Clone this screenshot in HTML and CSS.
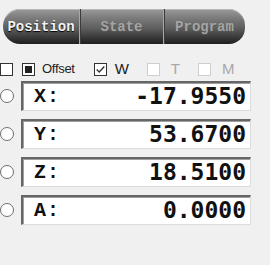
FILE: index.html
```html
<!DOCTYPE html>
<html lang="en">
<head>
    <meta charset="UTF-8">
    <title>Position</title>
    <link rel="stylesheet" href="styles.css">
</head>
<body>
    <!-- tab strip -->
    <div class="tabs">
        <div class="tab tab-pos active">Position</div>
        <div class="tab tab-state">State</div>
        <div class="tab tab-prog">Program</div>
    </div>

    <!-- option checkboxes -->
    <div class="options">
        <span class="box first"></span>
        <span class="box filled"><span class="dot"></span></span>
        <span class="lbl offset">Offset</span>
        <span class="box checked">
            <svg width="13" height="13" viewBox="0 0 13 13"><path d="M2 6.5 L5 9.5 L11 3" fill="none" stroke="#333" stroke-width="1.6"/></svg>
        </span>
        <span class="lbl big">W</span>
        <span class="box off"></span>
        <span class="lbl big dim">T</span>
        <span class="box off"></span>
        <span class="lbl big dim">M</span>
    </div>

    <!-- axis readouts -->
    <div class="axes">
        <div class="axis">
            <span class="radio"></span>
            <div class="field"><span class="name">X:</span><span class="value">-17.9550</span></div>
        </div>
        <div class="axis">
            <span class="radio"></span>
            <div class="field"><span class="name">Y:</span><span class="value">53.6700</span></div>
        </div>
        <div class="axis">
            <span class="radio"></span>
            <div class="field"><span class="name">Z:</span><span class="value">18.5100</span></div>
        </div>
        <div class="axis">
            <span class="radio"></span>
            <div class="field"><span class="name">A:</span><span class="value">0.0000</span></div>
        </div>
    </div>
</body>
</html>
```

FILE: styles.css
```css
body {
    margin: 0;
    padding: 0;
    background-color: #f0f0f0;
    font-family: 'Liberation Sans', Arial, sans-serif;
    width: 270px;
    height: 265px;
    overflow: hidden;
}
.tabs {
    display: flex;
    margin: 9px 0 0 3px;
    width: 242px;
    height: 35px;
    border-radius: 17px 16px 16px 17px;
    background: linear-gradient(#9a9a9a 0%, #7c7c7c 25%, #5e5e5e 55%, #3a3a3a 80%, #1f1f1f 100%);
    box-shadow: inset 0 1px 0 #b8b8b8;
    overflow: hidden;
}
.tab {
    display: flex;
    align-items: center;
    justify-content: center;
    font-family: 'Liberation Mono', 'Courier New', monospace;
    font-weight: bold;
    font-size: 14px;
    color: #a4a4a4;
    text-shadow: 0 1px 0 #555;
    box-sizing: border-box;
}
.tab.active {
    color: #f2f2f2;
    text-shadow: 0 1px 1px #000;
}
.tab-pos {
    width: 76px;
}
.tab-state {
    width: 84px;
    border-left: 1px solid #a8a8a8;
    box-shadow: inset 1px 0 0 #3c3c3c;
}
.tab-prog {
    width: 82px;
    border-left: 1px solid #a8a8a8;
    box-shadow: inset 1px 0 0 #3c3c3c;
}
.options {
    display: flex;
    align-items: center;
    margin-top: 18px;
    height: 14px;
    line-height: 14px;
}
.box {
    display: inline-flex;
    align-items: center;
    justify-content: center;
    width: 13px;
    height: 13px;
    box-sizing: border-box;
    border: 1px solid #333;
    background: #fff;
}
.box.filled {
    margin-left: 9px;
}
.dot {
    width: 7px;
    height: 7px;
    background: #222;
}
.box.checked {
    margin-left: 19px;
}
.box.off {
    border-color: #cfcfcf;
    margin-left: 18px;
}
.lbl {
    margin-left: 7px;
    color: #222;
}
.offset {
    font-size: 13px;
    letter-spacing: -0.3px;
}
.big {
    font-size: 15px;
    margin-left: 8px;
}
.dim {
    color: #a8a8a8;
    margin-left: 11px;
}
.axes {
    margin-top: 5px;
}
.axis {
    display: flex;
    align-items: center;
    margin-bottom: 8px;
}
.radio {
    width: 12px;
    height: 12px;
    border: 1px solid #6e6e6e;
    border-radius: 50%;
    background: #fff;
    margin-right: 7px;
}
.field {
    display: flex;
    align-items: flex-end;
    justify-content: space-between;
    width: 230px;
    height: 30px;
    box-sizing: border-box;
    background: #fff;
    border-top: 2px solid #666;
    border-left: 2px solid #666;
    border-right: 1px solid #dcdcdc;
    border-bottom: 1px solid #dcdcdc;
    box-shadow: inset 1px 1px 0 #a0a0a0;
    padding: 0 4px 3px 11px;
}
.name {
    font-family: 'Liberation Mono', 'Courier New', monospace;
    font-weight: bold;
    font-size: 20px;
    letter-spacing: 1px;
    color: #111;
    line-height: 20px;
}
.value {
    font-family: 'DejaVu Sans Mono', monospace;
    font-weight: bold;
    font-size: 23px;
    color: #111;
    line-height: 22px;
}
```
